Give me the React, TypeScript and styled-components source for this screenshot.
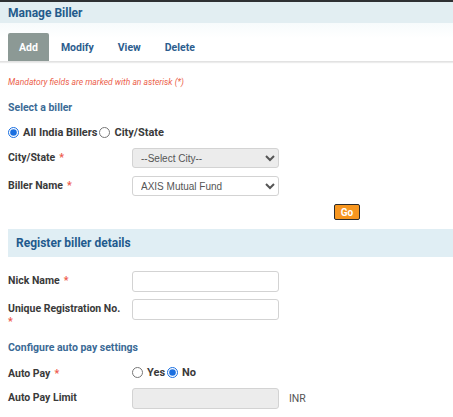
import React from 'react';
import styled, { createGlobalStyle } from 'styled-components';

const GlobalStyle = createGlobalStyle`
    body {
        margin: 0;
        background: #ffffff;
        font-family: Roboto, "Liberation Sans", Arial, sans-serif;
    }
`;

const Page = styled.main`
    width: 453px;
    display: flex;
    flex-direction: column;
    border-top: 2px solid #2e3133;
`;

const PageHeader = styled.header`
    height: 21px;
    display: flex;
    align-items: center;
    padding: 0 8px;
    background: #e2eef2;
    color: #245b8b;
    font-size: 12px;
    font-weight: bold;
    box-sizing: border-box;
`;

const TabBar = styled.nav`
    display: flex;
    align-items: flex-end;
    padding: 10px 8px 0;
    background: linear-gradient(#f7fbfc, #ffffff 40%);
    border-bottom: 1px solid #e2e2e2;
    box-shadow: 0 1px 1px #ececec;
`;

const Tab = styled.button<{ $active?: boolean }>`
    height: 28px;
    padding: 0 ${({ $active }) => ($active ? '11px' : '12px')};
    margin: 0;
    border: none;
    border-radius: 2px 2px 0 0;
    background: ${({ $active }) => ($active ? '#8c9995' : 'transparent')};
    color: ${({ $active }) => ($active ? '#ffffff' : '#2c5d8e')};
    font-family: inherit;
    font-size: 10.5px;
    font-weight: bold;
    cursor: pointer;
`;

const Content = styled.section`
    display: flex;
    flex-direction: column;
    padding: 0 0 0 8px;
`;

const Note = styled.p`
    margin: 14px 0 0;
    font-size: 8.5px;
    line-height: 12px;
    font-style: italic;
    color: #ec5f4c;
`;

const SectionTitle = styled.h3<{ $top: number }>`
    margin: ${({ $top }) => $top}px 0 0;
    font-size: 10.5px;
    line-height: 14px;
    font-weight: bold;
    color: #3b6a96;
`;

const RadioGroup = styled.div<{ $top: number }>`
    display: flex;
    align-items: center;
    margin-top: ${({ $top }) => $top}px;
    height: 14px;
`;

const RadioLabel = styled.label`
    display: flex;
    align-items: center;
    font-size: 11px;
    font-weight: bold;
    color: #3a3a3a;
    margin-right: 2px;

    input {
        width: 11px;
        height: 11px;
        margin: 0 4px 0 0;
        accent-color: #1a6fe0;
    }
`;

const Row = styled.div<{ $top: number }>`
    display: flex;
    align-items: flex-start;
    margin-top: ${({ $top }) => $top}px;
`;

const Label = styled.label`
    width: 124px;
    flex-shrink: 0;
    font-size: 10.5px;
    line-height: 15px;
    font-weight: bold;
    color: #3a3a3a;
    padding-top: 2px;
`;

const Star = styled.span`
    color: #ee5a4b;
    margin-left: 4px;
`;

const LowStar = styled.span`
    display: block;
    color: #ee5a4b;
    line-height: 10px;
    margin-top: 1px;
`;

const Select = styled.select<{ $muted?: boolean }>`
    width: 147px;
    height: 20px;
    padding: 0 4px;
    border: 1px solid #d3d3d3;
    border-radius: 3px;
    background: ${({ $muted }) => ($muted ? '#ececec' : '#ffffff')};
    color: #555555;
    font-family: "Liberation Sans", Arial, sans-serif;
    font-size: 10px;
`;

const Input = styled.input<{ $disabled?: boolean }>`
    width: 147px;
    height: 21px;
    box-sizing: border-box;
    border: 1px solid #d3d3d3;
    border-radius: 3px;
    background: ${({ $disabled }) => ($disabled ? '#ececec' : '#ffffff')};
`;

const Unit = styled.span`
    margin-left: 10px;
    font-size: 10.5px;
    line-height: 21px;
    color: #555555;
`;

const GoRow = styled.div`
    display: flex;
    padding-left: 326px;
    margin-top: 8px;
`;

const GoButton = styled.button`
    width: 26px;
    height: 16px;
    padding: 0;
    border: 1px solid #2b2b2b;
    border-radius: 2px;
    background: #f7961f;
    color: #ffffff;
    font-family: inherit;
    font-size: 10px;
    font-weight: bold;
`;

const Band = styled.div`
    height: 28px;
    margin-top: 9px;
    display: flex;
    align-items: center;
    padding-left: 8px;
    background: #e0eef4;
    color: #1f5a8d;
    font-size: 12px;
    font-weight: bold;
`;

const tabs = ['Add', 'Modify', 'View', 'Delete'];

const App = () => (
    <>
        <GlobalStyle />
        <Page>
            <PageHeader>Manage Biller</PageHeader>
            <TabBar>
                {tabs.map((tab, i) => (
                    <Tab key={tab} $active={i === 0}>
                        {tab}
                    </Tab>
                ))}
            </TabBar>
            <Content>
                <Note>Mandatory fields are marked with an asterisk (*)</Note>
                <SectionTitle $top={13}>Select a biller</SectionTitle>
                <RadioGroup $top={10}>
                    <RadioLabel>
                        <input type="radio" name="scope" defaultChecked />
                        All India Billers
                    </RadioLabel>
                    <RadioLabel>
                        <input type="radio" name="scope" />
                        City/State
                    </RadioLabel>
                </RadioGroup>
                <Row $top={9}>
                    <Label>
                        City/State<Star>*</Star>
                    </Label>
                    <Select $muted defaultValue="">
                        <option value="">--Select City--</option>
                    </Select>
                </Row>
                <Row $top={8}>
                    <Label>
                        Biller Name<Star>*</Star>
                    </Label>
                    <Select defaultValue="axis">
                        <option value="axis">AXIS Mutual Fund</option>
                    </Select>
                </Row>
                <GoRow>
                    <GoButton>Go</GoButton>
                </GoRow>
                <Band>Register biller details</Band>
                <Row $top={14}>
                    <Label>
                        Nick Name<Star>*</Star>
                    </Label>
                    <Input />
                </Row>
                <Row $top={7}>
                    <Label>
                        Unique Registration No.
                        <LowStar>*</LowStar>
                    </Label>
                    <Input />
                </Row>
                <SectionTitle $top={14}>Configure auto pay settings</SectionTitle>
                <Row $top={9}>
                    <Label>
                        Auto Pay<Star>*</Star>
                    </Label>
                    <RadioGroup $top={1}>
                        <RadioLabel>
                            <input type="radio" name="autopay" />
                            Yes
                        </RadioLabel>
                        <RadioLabel>
                            <input type="radio" name="autopay" defaultChecked />
                            No
                        </RadioLabel>
                    </RadioGroup>
                </Row>
                <Row $top={7}>
                    <Label>Auto Pay Limit</Label>
                    <Input $disabled disabled />
                    <Unit>INR</Unit>
                </Row>
            </Content>
        </Page>
    </>
);

export default App;
